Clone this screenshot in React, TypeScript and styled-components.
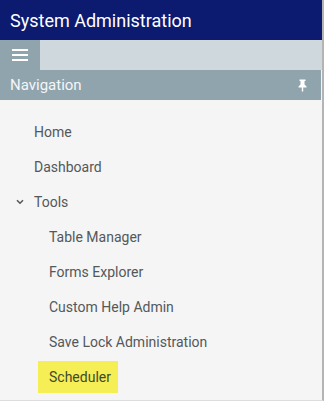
import styled, { createGlobalStyle } from 'styled-components'

const GlobalStyle = createGlobalStyle`
  body {
    margin: 0;
    background: #ffffff;
    font-family: Roboto, "Liberation Sans", sans-serif;
  }
`

const Frame = styled.div`
  width: 322px;
  border-right: 2px solid #b4b4b4;
  border-bottom: 1px solid #dddddd;
  background: #f5f5f5;
`

const Header = styled.header`
  height: 40px;
  background: #0c1a70;
  color: #ffffff;
  display: flex;
  align-items: center;
  padding: 0 10px;
  font-size: 18px;
`

const Toolbar = styled.div`
  height: 30px;
  background: #cfd8dc;
  display: flex;
`

const MenuButton = styled.button`
  width: 40px;
  height: 30px;
  border: 0;
  padding: 0;
  background: #90a4ae;
  display: flex;
  flex-direction: column;
  align-items: center;
  justify-content: center;
  gap: 3px;
`

const Bar = styled.span`
  display: block;
  width: 16px;
  height: 2px;
  background: #ffffff;
`

const NavTitle = styled.div`
  height: 30px;
  margin-right: 1px;
  background: #90a4ae;
  color: #f4f6f7;
  display: flex;
  align-items: center;
  justify-content: space-between;
  padding: 0 14px 0 10px;
  font-size: 15px;
`

const List = styled.ul`
  list-style: none;
  margin: 0;
  padding: 14px 0 6px;
`

const Item = styled.li<{ $depth: number }>`
  height: 35px;
  display: flex;
  align-items: center;
  padding-left: ${({ $depth }) => ($depth === 0 ? 34 : 38)}px;
  position: relative;
  font-size: 14px;
  color: #53585b;
`

const Label = styled.span<{ $active?: boolean }>`
  display: inline-flex;
  align-items: center;
  height: 32px;
  padding: 0 7px 0 11px;
  background: ${({ $active }) => ($active ? '#f5ee55' : 'transparent')};
  color: ${({ $active }) => ($active ? '#3f4a2c' : 'inherit')};
`

const Chevron = styled.svg`
  position: absolute;
  left: 16px;
  top: 50%;
  margin-top: -3px;
`

const PinIcon = () => (
  <svg width="9" height="13" viewBox="0 0 9 13">
    <path d="M1.5 0.5h6v1.5h-1v3.5l2 2v1h-3.3v4h-1.4v-4H0.5v-1l2-2V2h-1z" fill="#ffffff" />
  </svg>
)

const items = [
  { label: 'Home', depth: 0 },
  { label: 'Dashboard', depth: 0 },
  { label: 'Tools', depth: 0, open: true },
  { label: 'Table Manager', depth: 1 },
  { label: 'Forms Explorer', depth: 1 },
  { label: 'Custom Help Admin', depth: 1 },
  { label: 'Save Lock Administration', depth: 1 },
  { label: 'Scheduler', depth: 1, active: true },
]

export default function App() {
  return (
    <>
      <GlobalStyle />
      <Frame>
        <Header>System Administration</Header>
        <Toolbar>
          <MenuButton aria-label="Menu">
            <Bar />
            <Bar />
            <Bar />
          </MenuButton>
        </Toolbar>
        <NavTitle>
          <span>Navigation</span>
          <PinIcon />
        </NavTitle>
        <List>
          {items.map((it) => (
            <Item key={it.label} $depth={it.depth}>
              {it.open && (
                <Chevron width="8" height="6" viewBox="0 0 8 6">
                  <path d="M1 1.2l3 3 3-3" fill="none" stroke="#53585b" strokeWidth="1.6" />
                </Chevron>
              )}
              {it.depth === 0 ? (
                <span>{it.label}</span>
              ) : (
                <Label $active={it.active}>{it.label}</Label>
              )}
            </Item>
          ))}
        </List>
      </Frame>
    </>
  )
}
